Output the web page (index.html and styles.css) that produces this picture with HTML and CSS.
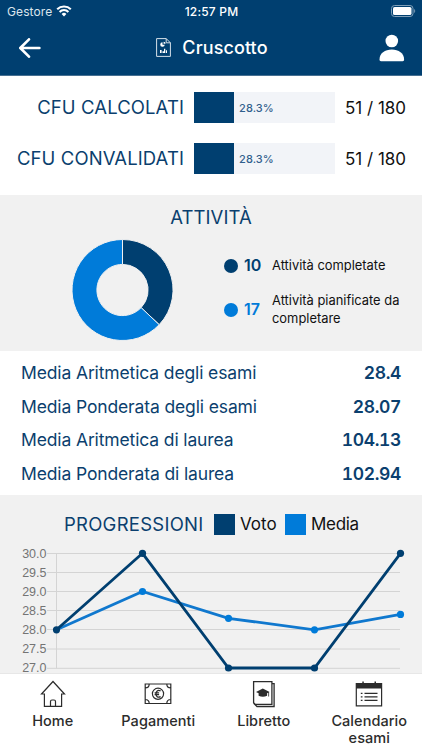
FILE: index.html
```html
<!DOCTYPE html>
<html lang="it">
<head>
<meta charset="utf-8">
<meta name="viewport" content="width=device-width, initial-scale=1">
<title>Cruscotto</title>
<link rel="stylesheet" href="styles.css">
</head>
<body>
<div class="app">
  <header class="header">
    <div class="status">
      <div class="carrier"><span>Gestore</span>
        <svg width="16" height="12" viewBox="0 0 16 12" fill="none" stroke="#fff" stroke-width="2.1"><path d="M1.2 4.3a9.7 9.7 0 0 1 13.6 0M3.6 6.9a6.2 6.2 0 0 1 8.8 0"/><path d="M8 11.4 5.6 9a3.4 3.4 0 0 1 4.8 0z" fill="#fff" stroke="none"/></svg>
      </div>
      <div class="clock">12:57 PM</div>
      <svg class="battery" width="25" height="12" viewBox="0 0 25 12"><rect x=".5" y=".5" width="21.5" height="11" rx="3" fill="none" stroke="#7f9fb8"/><rect x="2" y="2" width="18.5" height="8" rx="1.6" fill="#fff"/><path d="M23.2 4v4c1.3-.5 1.3-3.500 0-4z" fill="#7f9fb8"/></svg>
    </div>
    <nav class="nav">
      <svg class="back" width="22" height="20" viewBox="0 0 22 20" fill="none" stroke="#fff" stroke-width="2.6" stroke-linecap="round" stroke-linejoin="round"><path d="M20.400 10H1.500M10 1.300 1.300 10 10 18.700"/></svg>
      <h1 class="title">
        <svg width="15" height="19" viewBox="0 0 15 19"><path d="M.6.6h9.600l4.200 4.200v13.600H.6zM10.200.6v4.200h4.200" fill="none" stroke="#d5e0e9" stroke-width="1"/><path d="M6.500 4.200a2.300 2.300 0 1 0 2.300 2.600H6.500zM7.600 3.700v2h2a2 2 0 0 0-2-2zM4 12h1.600v3H4zM6.500 13.300H8v1.700H6.500zM8 10.700h1.300V15H8zM10 12.300h1V15h-1z" fill="#fff"/></svg>
        <span>Cruscotto</span>
      </h1>
      <svg class="user" width="26" height="28" viewBox="0 0 26 28" fill="#fff"><circle cx="12.800" cy="7" r="6.300"/><path d="M.5 25.500C.5 19.300 6 15.600 12.800 15.600S25.100 19.300 25.100 25.500c0 1-.5 1.700-1.500 1.700H2c-1 0-1.500-.7-1.500-1.700z"/></svg>
    </nav>
  </header>

  <main class="content">
    <section class="credits">
      <div class="credit"><span class="credit-name">CFU CALCOLATI</span><div class="bar"><div class="fill"></div><span class="pct">28.3%</span></div><span class="total">51 / 180</span></div>
      <div class="credit"><span class="credit-name">CFU CONVALIDATI</span><div class="bar"><div class="fill"></div><span class="pct">28.3%</span></div><span class="total">51 / 180</span></div>
    </section>

    <section class="activities">
      <h2 class="heading">ATTIVITÀ</h2>
      <div class="activity-body">
        <svg class="donut" width="103" height="102" viewBox="-51.500 -51 103 102" stroke="#f1f1f1" stroke-width="1"><path fill="#003f70" d="M0-50.500A50.500 50.500 0 0 1 36.700 34.700L18.600 17.600A25.600 25.600 0 0 0 0-25.600z"/><path fill="#007bd9" d="M36.700 34.700A50.500 50.500 0 1 1 0-50.500V-25.600A25.600 25.600 0 1 0 18.600 17.600z"/></svg>
        <ul class="legend">
          <li class="done"><i class="dot"></i><b>10</b><span>Attività completate</span></li>
          <li class="planned"><i class="dot"></i><b>17</b><span>Attività pianificate da completare</span></li>
        </ul>
      </div>
    </section>

    <section class="averages">
      <div class="avg"><span>Media Aritmetica degli esami</span><b>28.4</b></div>
      <div class="avg"><span>Media Ponderata degli esami</span><b>28.07</b></div>
      <div class="avg"><span>Media Aritmetica di laurea</span><b>104.13</b></div>
      <div class="avg"><span>Media Ponderata di laurea</span><b>102.94</b></div>
    </section>

    <section class="progress">
      <div class="progress-head"><h2 class="heading">PROGRESSIONI</h2><i class="swatch navy"></i><span class="voto">Voto</span><i class="swatch blue"></i><span class="media">Media</span></div>
      <svg class="chart" width="422" height="133" viewBox="0 540 422 133">
        <g stroke="#d4d4d4" stroke-width="1"><path d="M47 553.500H400M47 572.500H400M47 591.500H400M47 610.500H400M47 629.500H400M47 649H400M47 668.300H400M56.500 553.500V668.300"/></g>
        <g class="axis"><text x="46.500" y="557.900">30.0</text><text x="46.500" y="577">29.5</text><text x="46.500" y="596.100">29.0</text><text x="46.500" y="615.200">28.5</text><text x="46.500" y="634.300">28.0</text><text x="46.500" y="653.400">27.5</text><text x="46.500" y="672.300">27.0</text></g>
        <g fill="#007bd9"><path d="M56.500 629.800 142.500 591.500 228.500 618.300 314.500 629.800 400.500 614.400" fill="none" stroke="#1078ce" stroke-width="2.800"/><circle cx="142.500" cy="591.500" r="3.600"/><circle cx="228.500" cy="618.300" r="3.600"/><circle cx="314.500" cy="629.800" r="3.600"/><circle cx="400.500" cy="614.400" r="3.600"/></g>
        <g fill="#003f70"><path d="M56.500 629.800 142.500 553.300 228.500 668H314.500L400.500 553.300" fill="none" stroke="#003f70" stroke-width="2.800"/><circle cx="56.500" cy="629.800" r="3.600"/><circle cx="142.500" cy="553.300" r="3.600"/><circle cx="228.500" cy="668" r="3.600"/><circle cx="314.500" cy="668" r="3.600"/><circle cx="400.500" cy="553.300" r="3.600"/></g>
      </svg>
    </section>
  </main>

  <footer class="tabs">
    <a class="tab"><svg width="28" height="28" viewBox="0 0 28 28" fill="none" stroke="#2c2c2c" stroke-width="1.200"><path d="M5.400 14H2.500L14 1.500 25.500 14h-2.900v12.400H5.400zM11.500 26v-4.500q0-1.500 1.500-1.500h2q1.500 0 1.500 1.500V26"/></svg><span>Home</span></a>
    <a class="tab"><svg width="28" height="28" viewBox="0 0 28 28" fill="none" stroke="#2c2c2c" stroke-width="1.200"><path d="M1.200 4h25.600v19.500H1.200zM1.200 8q4 0 4-4M22.800 4q0 4 4 4M1.200 19.500q4 0 4 4M22.800 23.500q0-4 4-4"/><circle cx="14" cy="13.800" r="5.600"/><path d="M16.600 10.900c-3-1.400-4.600.6-4.600 2.900s1.600 4.300 4.600 2.900M10.600 12.900h4.500M10.600 14.700h4.500" stroke-width="1.300"/></svg><span>Pagamenti</span></a>
    <a class="tab"><svg width="28" height="28" viewBox="0 0 28 28" fill="none" stroke="#2c2c2c" stroke-width="1.300"><path d="M3.600 1.600h18.300v22.800H5.300l-1.700-1.700zM21.900 3.600h2.200v22.900H7l-3.300-3.300"/><path d="m6 12 6.800-3.400 6.800 3.400-2.500 1.300v2.400q-4.200 2-8.500 0v-2.400zM18.300 12.300h.8v4.200h-.8z" fill="#2c2c2c" stroke="none"/></svg><span>Libretto</span></a>
    <a class="tab"><svg width="28" height="28" viewBox="0 0 28 28" fill="none" stroke="#2c2c2c" stroke-width="1.200"><path d="M1.300 3.500h25.300v22.300H1.300z"/><path d="M1 3h26v5.500H1zM7.300 1.500h1.500V3H7.300zM19.500 1.500H21V3h-1.500z" fill="#2c2c2c" stroke="none"/><path d="M9.500 13.300h13M9.500 16.800h13M9.500 20.300h13M5.800 13.300h1.700M5.800 16.800h1.700M5.800 20.300h1.700"/></svg><span>Calendario<br>esami</span></a>
  </footer>
</div>
</body>
</html>
```
FILE: styles.css
```css
* { box-sizing: border-box; }
body { margin: 0; font-family: Inter, "Liberation Sans", sans-serif; color: #111; background: #fff; }
h1, h2, ul { margin: 0; padding: 0; font-weight: 400; list-style: none; }
svg { display: block; flex: none; }
b { font-weight: 600; }
.app { width: 422px; height: 750px; display: flex; flex-direction: column; overflow: hidden; }

.header { height: 76px; flex: none; background: #003f70; color: #fff; border-bottom: 1px solid #466f91; }
.status { height: 22px; display: grid; grid-template-columns: 1fr auto 1fr; align-items: center; padding: 0 6px 0 7px; font-size: 12px; }
.carrier { display: flex; gap: 4px; align-items: center; letter-spacing: 0.1px; color: #dce5ec; }
.clock { font-weight: 500; letter-spacing: 0.2px; }
.battery { justify-self: end; }
.nav { height: 53px; display: grid; grid-template-columns: 1fr auto 1fr; align-items: center; padding: 0 17px 2px 19px; }
.title { display: flex; align-items: center; gap: 11px; }
.title span { font-size: 18px; font-weight: 500; line-height: 24px; letter-spacing: 0.1px; padding-top: 1px; }
.user { justify-self: end; }

.content { flex: 1; min-height: 0; overflow: hidden; }
.heading { font-size: 18.500px; line-height: 24px; letter-spacing: 0.100px; color: #0b3f6e; }
.credits { height: 119px; padding-top: 16px; display: flex; flex-direction: column; gap: 20px; }
.credit { height: 31px; display: flex; align-items: center; white-space: nowrap; }
.credit-name { width: 184px; padding-bottom: 1px; text-align: right; font-size: 18.500px; letter-spacing: 0.100px; color: #0b3f6e; }
.bar { width: 141px; height: 31px; margin: 0 10px; background: #f2f4f8; display: flex; align-items: center; }
.fill { width: 40px; height: 100%; background: #003f70; }
.pct { margin-left: 5px; font-size: 11px; font-weight: 500; letter-spacing: 0.100px; color: #315f8d; }
.total { font-size: 17px; }

.activities { height: 156px; background: #f1f1f1; padding-top: 10px; }
.activities .heading { text-align: center; }
.activity-body { display: flex; padding: 10px 0 0 71px; align-items: center; }
.legend { margin: 4px 0 0 50px; display: flex; flex-direction: column; gap: 18px; }
.legend li { display: grid; grid-template-columns: 14px 34px 140px; align-items: center; font-size: 12.900px; line-height: 17.500px; }
.legend b { font-size: 16px; padding-left: 6px; }
.dot { width: 14px; height: 14px; border-radius: 50%; background: currentColor; }
.done .dot, .done b { color: #003f70; }
.planned .dot, .planned b { color: #007bd9; }

.averages { height: 144px; padding: 5px 21px 0; color: #0b3f6e; }
.avg { height: 33.600px; display: flex; justify-content: space-between; align-items: center; font-size: 17.500px; letter-spacing: -0.130px; }
.avg b { font-variant-numeric: tabular-nums; letter-spacing: -0.350px; }

.progress { height: 178px; background: #f1f1f1; padding-top: 17px; }
.progress-head { height: 24px; display: flex; align-items: center; padding-left: 64px; font-size: 17px; }
.progress-head .heading { width: 150px; letter-spacing: 0.250px; }
.swatch { width: 21px; height: 21px; margin-right: 5px; }
.navy { background: #003f70; }
.blue { background: #007bd9; }
.voto { width: 45px; }
.media { letter-spacing: -0.300px; }
.chart { margin-top: 4px; }
.axis { font: 12.500px "Liberation Sans", sans-serif; fill: #747474; text-anchor: end; }

.tabs { flex: none; height: 77px; border-top: 1px solid #e7e7e7; background: #fff; display: grid; grid-template-columns: repeat(4, 1fr); padding-top: 6px; }
.tab { display: flex; flex-direction: column; align-items: center; gap: 5px; text-align: center; font-size: 14.500px; font-weight: 500; line-height: 16.500px; letter-spacing: 0.050px; color: #2c2c2c; white-space: nowrap; }
```
